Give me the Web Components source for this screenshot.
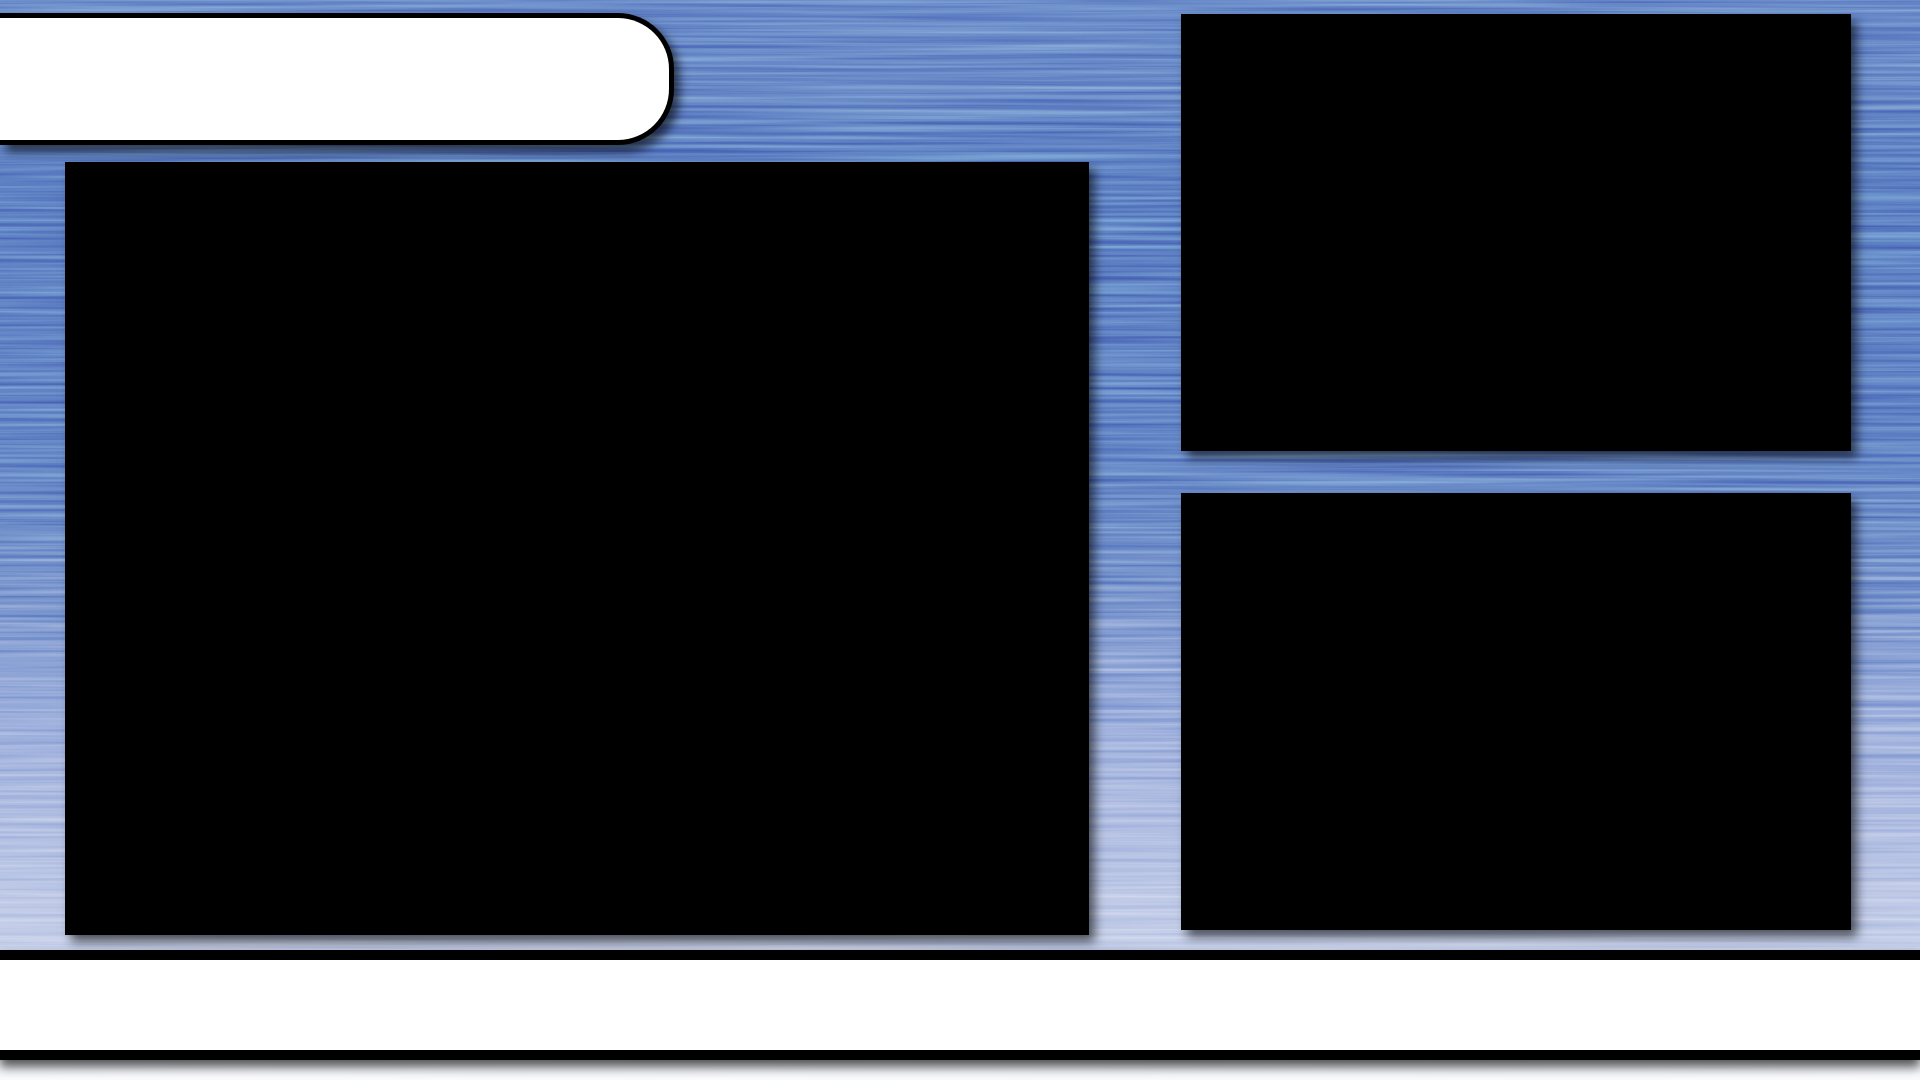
<!DOCTYPE html>
<html lang="en"><head><meta charset="utf-8"><title>Layout</title>
<style>html,body{margin:0;padding:0;background:#fff;overflow:hidden}</style></head>
<body>
<slide-stage>
  <title-pill slot="title"></title-pill>
  <video-panel slot="main" style="height:773px;margin-left:65px;width:1024px"></video-panel>
  <video-panel slot="side" style="height:437px"></video-panel>
  <video-panel slot="side" style="height:437px"></video-panel>
  <footer-bar slot="footer"></footer-bar>
</slide-stage>
<script>
class SlideStage extends HTMLElement{constructor(){super();this.attachShadow({mode:'open'}).innerHTML=`<style>
:host{display:block;position:relative;width:1920px;height:1080px;overflow:hidden;isolation:isolate;
background:linear-gradient(180deg,#6a8bc9 0,#6a8bc8 100px,#5f82c4 170px,#6385c6 400px,#6a8bc8 500px,#7c97ce 600px,#97abda 700px,#adbbe1 800px,#c3cde8 930px,#d3daee 1000px,#eff1f8 1060px,#fbfbfd 1080px)}
.tex{position:absolute;inset:0;width:100%;height:100%;mix-blend-mode:overlay;opacity:.28;z-index:-1}
.wrap{display:flex;flex-direction:column;height:100%}
.cols{display:grid;grid-template-columns:1089px 670px;column-gap:92px;padding-top:13px;height:937px;box-sizing:border-box}
.left{display:flex;flex-direction:column;gap:17px}
.right{display:flex;flex-direction:column;gap:42px;padding-top:1px}
</style>
<svg class="tex" aria-hidden="true"><defs><filter id="n" x="0" y="0" width="100%" height="100%" color-interpolation-filters="sRGB">
<feTurbulence type="fractalNoise" baseFrequency="0.0025 0.22" numOctaves="3" seed="7"/>
<feColorMatrix values="1.6 0 0 0 -.3  1.6 0 0 0 -.3  1.6 0 0 0 -.3  0 0 0 0 1"/></filter></defs>
<rect width="100%" height="100%" filter="url(#n)"/></svg>
<div class="wrap"><div class="cols"><div class="left"><slot name="title"></slot><slot name="main"></slot></div>
<div class="right"><slot name="side"></slot></div></div><slot name="footer"></slot></div>`}}
class TitlePill extends HTMLElement{constructor(){super();this.attachShadow({mode:'open'}).innerHTML=`<style>
:host{display:block;box-sizing:border-box;width:674px;height:132px;background:#fff;border:5px solid #000;border-left:0;
border-radius:0 56px 56px 0;box-shadow:6px 7px 10px rgba(0,0,0,.6)}</style>`}}
class VideoPanel extends HTMLElement{constructor(){super();this.attachShadow({mode:'open'}).innerHTML=`<style>
:host{display:block;background:#000;box-shadow:6px 7px 10px rgba(0,0,0,.6)}</style>`}}
class FooterBar extends HTMLElement{constructor(){super();this.attachShadow({mode:'open'}).innerHTML=`<style>
:host{display:block;box-sizing:border-box;height:110px;margin-top:13px;background:#fff;border-top:10px solid #000;border-bottom:10px solid #000;
box-shadow:0 7px 10px rgba(0,0,0,.65)}</style>`}}
customElements.define('slide-stage',SlideStage);
customElements.define('title-pill',TitlePill);
customElements.define('video-panel',VideoPanel);
customElements.define('footer-bar',FooterBar);
</script>
</body></html>
